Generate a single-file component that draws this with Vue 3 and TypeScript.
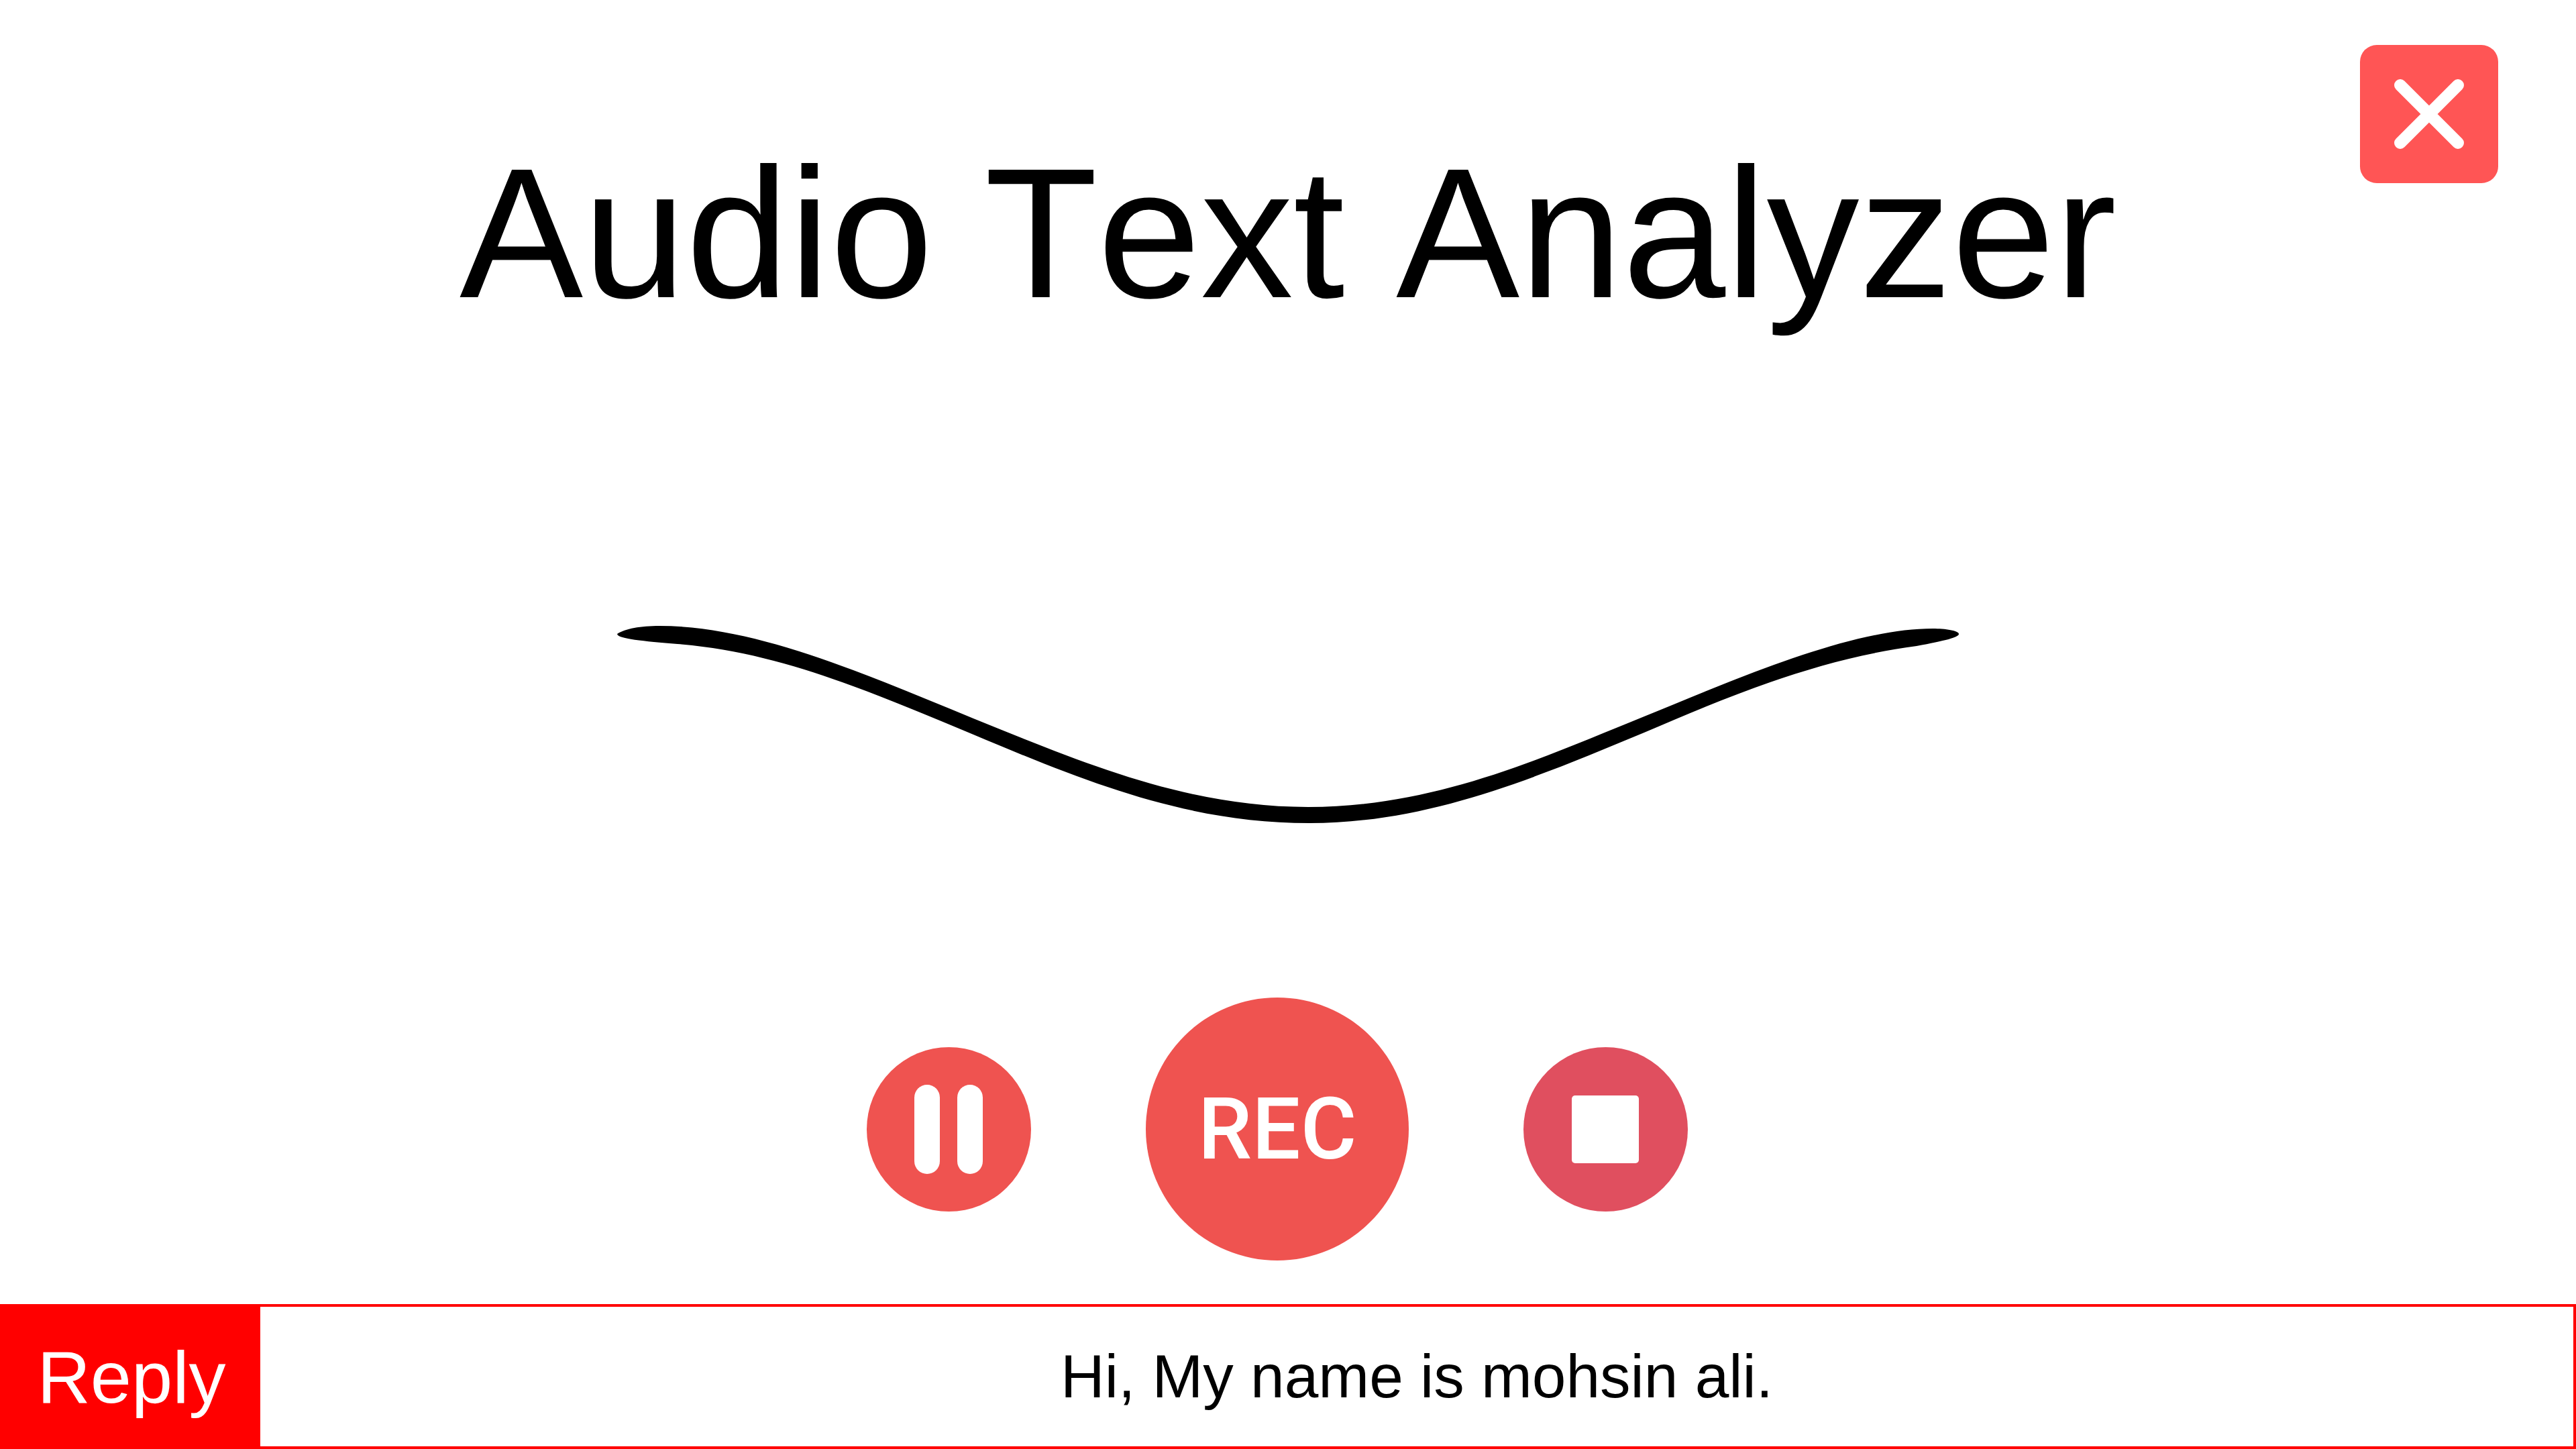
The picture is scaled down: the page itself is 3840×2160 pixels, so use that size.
<script setup lang="ts">
import { ref } from 'vue'

const title = 'Audio Text Analyzer'
const reply = ref<string>('Hi, My name is mohsin ali.')
</script>

<template>
  <main class="app">
    <header class="header">
      <h1 class="title">{{ title }}</h1>
      <button class="icon-button close" type="button" aria-label="Close">
        <svg viewBox="0 0 206 206" aria-hidden="true">
          <rect width="206" height="206" rx="25" fill="#ff5555" />
          <path d="M60 60 146 146M146 60 60 146" stroke="#fff" stroke-width="18" stroke-linecap="round" />
        </svg>
      </button>
    </header>

    <svg class="wave" viewBox="920 933 2000 294" aria-hidden="true">
      <path
        d="M920 945C932 937 955 933 983 933C1128 933 1290 1005 1451 1071C1616 1138 1770 1203 1950 1203C2140 1203 2300 1129 2451 1068C2590 1011 2760 937 2881 937C2900 937 2920 940 2920 945C2920 950 2900 955 2857 963C2715 982 2590 1032 2451 1092C2290 1159 2130 1227 1952 1227C1770 1227 1620 1166 1451 1095C1290 1028 1160 972 1010 960C960 956 920 952 920 945Z"
      />
    </svg>

    <section class="controls" aria-label="Recording">
      <button class="icon-button small" type="button" aria-label="Pause">
        <svg viewBox="0 0 245 245" aria-hidden="true">
          <circle cx="122.5" cy="122.5" r="122.5" fill="#ef5350" />
          <rect x="71" y="56" width="38" height="133" rx="19" fill="#fff" />
          <rect x="135" y="56" width="38" height="133" rx="19" fill="#fff" />
        </svg>
      </button>
      <button class="record" type="button">REC</button>
      <button class="icon-button small" type="button" aria-label="Stop">
        <svg viewBox="0 0 245 245" aria-hidden="true">
          <circle cx="122.5" cy="122.5" r="122.5" fill="#e04f5f" />
          <rect x="72" y="72" width="100" height="101" rx="5" fill="#fff" />
        </svg>
      </button>
    </section>

    <footer class="reply">
      <label class="reply-label" for="reply-text">Reply</label>
      <input id="reply-text" v-model="reply" class="reply-text" type="text" />
    </footer>
  </main>
</template>

<style>
body {
  margin: 0;
  background: #fff;
}
</style>

<style scoped>
.app {
  display: flex;
  flex-direction: column;
  align-items: center;
  min-height: 100vh;
  color: #000;
  font-family: 'Liberation Sans', Arial, sans-serif;
  font-kerning: none;
}

.header {
  display: grid;
  grid-template-columns: 1fr auto 1fr;
  align-items: start;
  box-sizing: border-box;
  width: 100%;
  padding: 67px 116px 0;
}

.title {
  grid-column: 2;
  margin: 0;
  padding-top: 120px;
  font-size: 276px;
  font-weight: 400;
  line-height: 320px;
  white-space: nowrap;
}

.icon-button {
  padding: 0;
  border: 0;
  background: none;
  cursor: pointer;
}

.icon-button svg {
  display: block;
  width: 100%;
}

.close {
  justify-self: end;
  width: 206px;
}

.wave {
  width: 100%;
  max-width: 2000px;
  margin-top: 426px;
}

.controls {
  display: flex;
  align-items: center;
  gap: 171px;
  margin-top: 260px;
  margin-bottom: 64px;
  padding-right: 32px;
}

.small {
  width: 245px;
}

.record {
  width: 392px;
  height: 392px;
  padding: 0;
  border: 0;
  border-radius: 50%;
  background: #ef5350;
  color: #fff;
  font: 500 128px Roboto, sans-serif;
  cursor: pointer;
}

.reply {
  display: flex;
  box-sizing: border-box;
  width: 100%;
  height: 216px;
  margin-top: auto;
  border: 4px solid #f00;
}

.reply-label {
  display: flex;
  flex: none;
  align-items: center;
  justify-content: center;
  width: 384px;
  background: #f00;
  color: #fff;
  font-size: 110px;
}

.reply-text {
  flex: 1;
  min-width: 0;
  padding: 0;
  border: 0;
  outline: 0;
  background: #fff;
  color: #000;
  font: inherit;
  font-size: 91px;
  text-align: center;
}
</style>
